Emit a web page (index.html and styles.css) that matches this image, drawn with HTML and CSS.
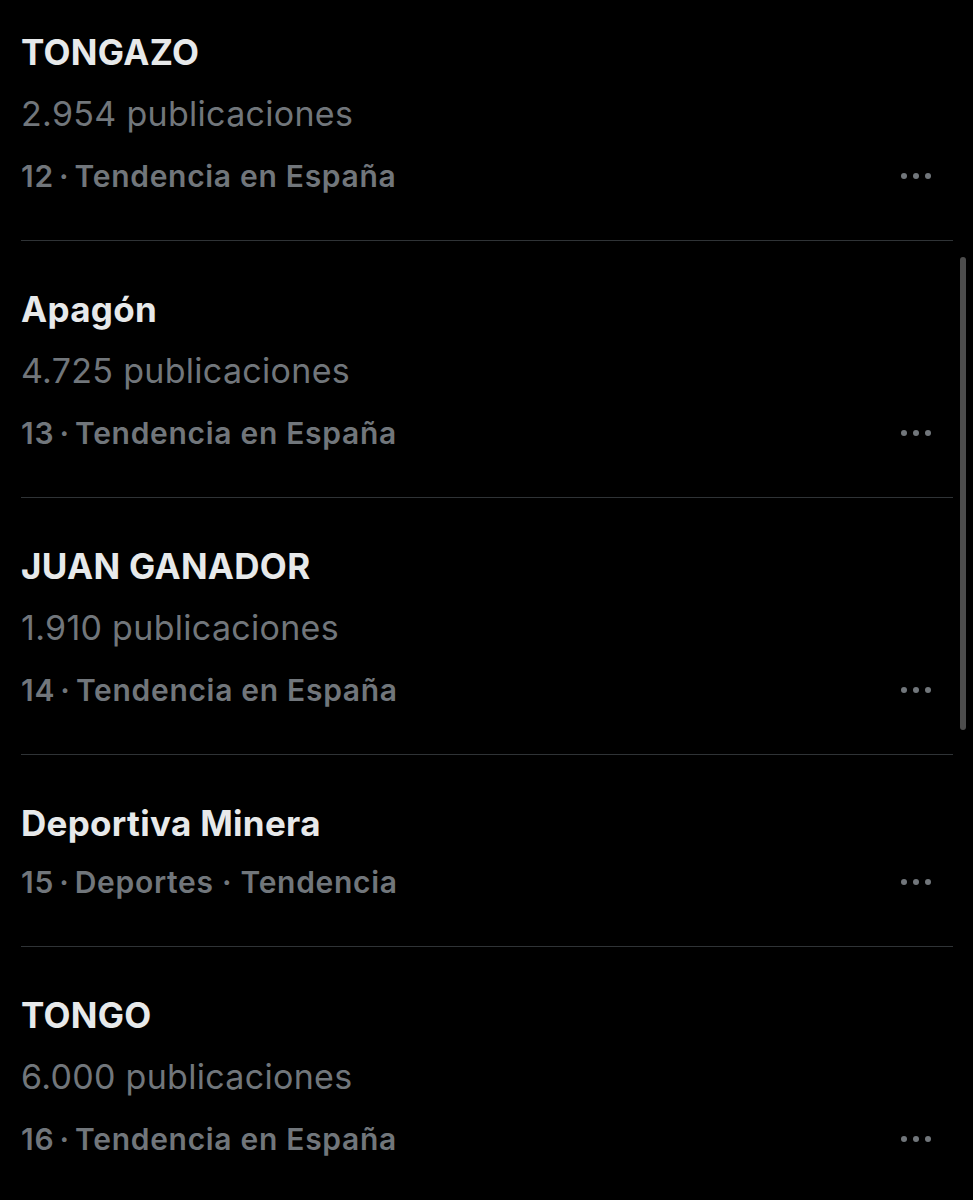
FILE: index.html
```html
<!DOCTYPE html>
<html lang="es">
<head>
    <meta charset="UTF-8">
    <meta name="viewport" content="width=device-width, initial-scale=1.0">
    <title>Tendencias</title>
    <link rel="stylesheet" href="styles.css">
</head>
<body>
    <div class="list">
        <div class="trend first">
            <div class="trend-title">TONGAZO</div>
            <div class="trend-count">2.954 publicaciones</div>
            <div class="trend-meta">
                <span>12<span class="sep"> · </span>Tendencia en España</span>
                <span class="dots"><i></i><i></i><i></i></span>
            </div>
        </div>

        <div class="trend">
            <div class="trend-title">Apagón</div>
            <div class="trend-count">4.725 publicaciones</div>
            <div class="trend-meta">
                <span>13<span class="sep"> · </span>Tendencia en España</span>
                <span class="dots"><i></i><i></i><i></i></span>
            </div>
        </div>

        <div class="trend">
            <div class="trend-title">JUAN GANADOR</div>
            <div class="trend-count">1.910 publicaciones</div>
            <div class="trend-meta">
                <span>14<span class="sep"> · </span>Tendencia en España</span>
                <span class="dots"><i></i><i></i><i></i></span>
            </div>
        </div>

        <div class="trend short">
            <div class="trend-title">Deportiva Minera</div>
            <div class="trend-meta">
                <span>15<span class="sep"> · </span>Deportes<span class="sep wide"> · </span>Tendencia</span>
                <span class="dots"><i></i><i></i><i></i></span>
            </div>
        </div>

        <div class="trend last">
            <div class="trend-title">TONGO</div>
            <div class="trend-count">6.000 publicaciones</div>
            <div class="trend-meta">
                <span>16<span class="sep"> · </span>Tendencia en España</span>
                <span class="dots"><i></i><i></i><i></i></span>
            </div>
        </div>
    </div>

    <div class="scrollbar"></div>
</body>
</html>
```

FILE: styles.css
```css
* {
    padding: 0;
    margin: 0;
    box-sizing: border-box;
}

body {
    background-color: #000;
    font-family: Inter, "Liberation Sans", sans-serif;
    width: 973px;
    height: 1200px;
    overflow: hidden;
    position: relative;
}

.list {
    padding-left: 21px;
    padding-right: 20px;
}

.trend {
    padding-top: 37px;
    padding-bottom: 33px;
    border-bottom: 1px solid #2f3336;
}

.trend.first {
    padding-top: 21px;
}

.trend.last {
    border-bottom: 0;
}

.trend-title {
    height: 62px;
    line-height: 62px;
    font-size: 35px;
    font-weight: 700;
    letter-spacing: 0.3px;
    color: #e7e9ea;
}

.trend-count {
    height: 62px;
    line-height: 62px;
    font-size: 34px;
    font-weight: 400;
    letter-spacing: 0.3px;
    color: #71767b;
}

.trend-meta {
    height: 62px;
    line-height: 62px;
    font-size: 30px;
    font-weight: 600;
    letter-spacing: 0.7px;
    color: #71767b;
    display: flex;
    justify-content: space-between;
    align-items: center;
    padding-right: 22px;
}

.trend.short .trend-meta {
    margin-top: -3px;
}

.sep {
    word-spacing: -3px;
}

.sep.wide {
    word-spacing: 0;
}

.dots {
    display: flex;
    gap: 6px;
}

.dots i {
    width: 6px;
    height: 6px;
    border-radius: 50%;
    background-color: #71767b;
}

.scrollbar {
    position: absolute;
    left: 960px;
    top: 257px;
    width: 6px;
    height: 473px;
    border-radius: 3px;
    background-color: #4d4d4d;
}
```
